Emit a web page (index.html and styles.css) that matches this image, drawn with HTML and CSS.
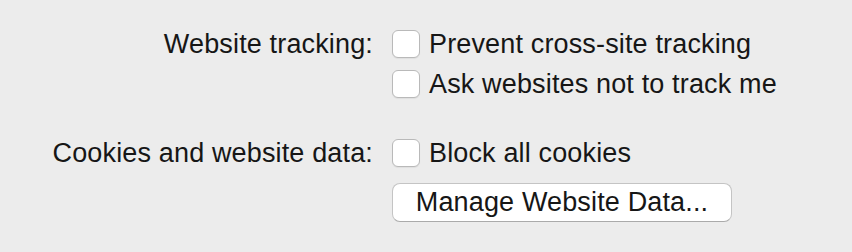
FILE: index.html
```html
<!DOCTYPE html>
<html lang="en">
<head>
  <meta charset="UTF-8" />
  <title>Privacy</title>
  <link rel="stylesheet" href="styles.css">
</head>
<body>
  <div class="prefs">
    <div class="label">Website tracking:</div>
    <label class="check"><span class="box"></span>Prevent cross-site tracking</label>

    <div class="label"></div>
    <label class="check"><span class="box"></span>Ask websites not to track me</label>

    <div class="label section">Cookies and website data:</div>
    <label class="check section"><span class="box"></span>Block all cookies</label>

    <div class="label"></div>
    <div class="btn-row"><button class="btn">Manage Website Data...</button></div>
  </div>
</body>
</html>
```

FILE: styles.css
```css
html, body {
  margin: 0;
  padding: 0;
  background: #ececec;
  font-family: "Liberation Sans", Arial, sans-serif;
  color: #161616;
}

.prefs {
  display: grid;
  grid-template-columns: 373px auto;
  column-gap: 19px;
  row-gap: 12px;
  padding-top: 30px;
  font-size: 27px;
  letter-spacing: 0.15px;
}

.label {
  text-align: right;
  height: 28px;
  line-height: 28px;
}

.check {
  display: flex;
  align-items: center;
  gap: 9px;
  height: 28px;
  line-height: 28px;
}

.section {
  margin-top: 29px;
}

.box {
  width: 28px;
  height: 28px;
  box-sizing: border-box;
  background: white;
  border: 1px solid #b9b9b9;
  border-radius: 6px;
  box-shadow: 0 1px 1px rgba(0, 0, 0, 0.06);
}

.btn-row {
  margin-top: 4px;
}

.btn {
  width: 340px;
  height: 39px;
  background: white;
  border: 1px solid #c4c4c4;
  border-bottom-color: #aaa;
  border-radius: 8px;
  font-family: inherit;
  font-size: 27px;
  letter-spacing: 0.15px;
  color: #161616;
  padding: 0;
}
```
